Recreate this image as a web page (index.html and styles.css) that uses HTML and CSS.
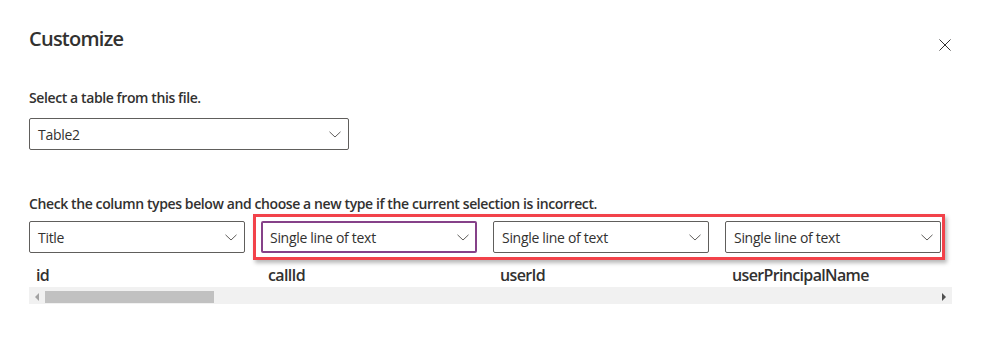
FILE: index.html
```html
<!DOCTYPE html>
<html lang="en">
<head>
<meta charset="utf-8">
<title>Customize</title>
<link rel="stylesheet" href="styles.css">
</head>
<body>
<div class="dialog">
  <div class="header">
    <h1 class="title">Customize</h1>
    <button class="close" aria-label="Close">
      <svg width="12" height="12" viewBox="0 0 12 12"><path d="M0.5 0.5 L11.5 11.5 M11.5 0.5 L0.5 11.5" stroke="#323130" stroke-width="1" fill="none"/></svg>
    </button>
  </div>

  <div class="label label-table">Select a table from this file.</div>
  <div class="dropdown dropdown-wide">
    <span class="dd-text">Table2</span>
    <svg class="chev" width="12" height="7" viewBox="0 0 12 7"><path d="M0.5 0.8 L6 6 L11.5 0.8" stroke="#605e5c" stroke-width="1" fill="none"/></svg>
  </div>

  <div class="label label-cols">Check the column types below and choose a new type if the current selection is incorrect.</div>

  <div class="types-wrap">
    <div class="types">
      <div class="dropdown dropdown-col">
        <span class="dd-text">Title</span>
        <svg class="chev" width="12" height="7" viewBox="0 0 12 7"><path d="M0.5 0.8 L6 6 L11.5 0.8" stroke="#605e5c" stroke-width="1" fill="none"/></svg>
      </div>
      <div class="dropdown dropdown-col focused">
        <span class="dd-text">Single line of text</span>
        <svg class="chev" width="12" height="7" viewBox="0 0 12 7"><path d="M0.5 0.8 L6 6 L11.5 0.8" stroke="#605e5c" stroke-width="1" fill="none"/></svg>
      </div>
      <div class="dropdown dropdown-col">
        <span class="dd-text">Single line of text</span>
        <svg class="chev" width="12" height="7" viewBox="0 0 12 7"><path d="M0.5 0.8 L6 6 L11.5 0.8" stroke="#605e5c" stroke-width="1" fill="none"/></svg>
      </div>
      <div class="dropdown dropdown-col">
        <span class="dd-text">Single line of text</span>
        <svg class="chev" width="12" height="7" viewBox="0 0 12 7"><path d="M0.5 0.8 L6 6 L11.5 0.8" stroke="#605e5c" stroke-width="1" fill="none"/></svg>
      </div>
    </div>
    <div class="highlight"></div>
  </div>

  <div class="col-headers">
    <div class="col-head">id</div>
    <div class="col-head">callId</div>
    <div class="col-head">userId</div>
    <div class="col-head">userPrincipalName</div>
  </div>

  <div class="hscroll">
    <span class="arrow arrow-left"></span>
    <span class="thumb"></span>
    <span class="spacer"></span>
    <span class="arrow arrow-right"></span>
  </div>
</div>
</body>
</html>
```

FILE: styles.css
```css
* { box-sizing: border-box; }

html, body {
  margin: 0;
  padding: 0;
  background: #ffffff;
}

body {
  font-family: "Open Sans", "Noto Sans", "Liberation Sans", sans-serif;
  color: #323130;
  width: 981px;
  height: 362px;
  overflow: hidden;
}

.dialog {
  padding: 25px 29px 0 29px;
}

.header {
  display: flex;
  justify-content: space-between;
  align-items: flex-start;
  height: 28px;
}

.title {
  margin: 0;
  font-size: 20px;
  line-height: 28px;
  font-weight: 600;
  color: #323130;
  letter-spacing: -0.75px;
}

.close {
  border: 0;
  background: transparent;
  padding: 0;
  margin: 14px 1px 0 0;
  width: 12px;
  height: 12px;
  display: flex;
}

.label {
  font-size: 14px;
  line-height: 20px;
  font-weight: 600;
  color: #323130;
  letter-spacing: -0.4px;
}

.label-table {
  margin-top: 35px;
}

.label-cols {
  margin-top: 44px;
}

.dropdown {
  display: flex;
  align-items: center;
  justify-content: space-between;
  height: 32px;
  border: 1px solid #605e5c;
  border-radius: 2px;
  padding: 0 7px 0 8px;
  font-size: 14px;
  color: #323130;
  background: #fff;
}

.dd-text {
  letter-spacing: -0.3px;
}

.dropdown-wide {
  margin-top: 10px;
  width: 320px;
}

.types-wrap {
  position: relative;
  margin-top: 7px;
}

.types {
  display: flex;
  gap: 16px;
}

.dropdown-col {
  width: 216px;
  flex: none;
}

.dropdown-col.focused {
  border: 2px solid #864189;
  padding: 0 6px 0 7px;
}

.chev {
  flex: none;
  margin-top: 1px;
}

.highlight {
  position: absolute;
  left: 224px;
  top: -7px;
  width: 692px;
  height: 46px;
  border: 3px solid #f2424a;
  box-shadow: 2px 3px 4px rgba(0, 0, 0, 0.28);
  pointer-events: none;
}

.col-headers {
  display: flex;
  margin-top: 11px;
  height: 23px;
}

.col-head {
  width: 232px;
  flex: none;
  padding-left: 7px;
  font-size: 16px;
  line-height: 22px;
  font-weight: 600;
  color: #323130;
  letter-spacing: -0.65px;
}

.hscroll {
  display: flex;
  align-items: center;
  width: 923px;
  height: 17px;
  background: #f1f1f1;
  padding: 0 6px;
}

.thumb {
  width: 169px;
  height: 12px;
  background: #c1c1c1;
  margin-left: 6px;
  margin-top: 3px;
}

.spacer {
  flex: 1;
}

.arrow {
  width: 0;
  height: 0;
  border-top: 4px solid transparent;
  border-bottom: 4px solid transparent;
  margin-top: 2px;
}

.arrow-left {
  border-right: 4px solid #a3a3a3;
}

.arrow-right {
  border-left: 4px solid #505050;
}
```
